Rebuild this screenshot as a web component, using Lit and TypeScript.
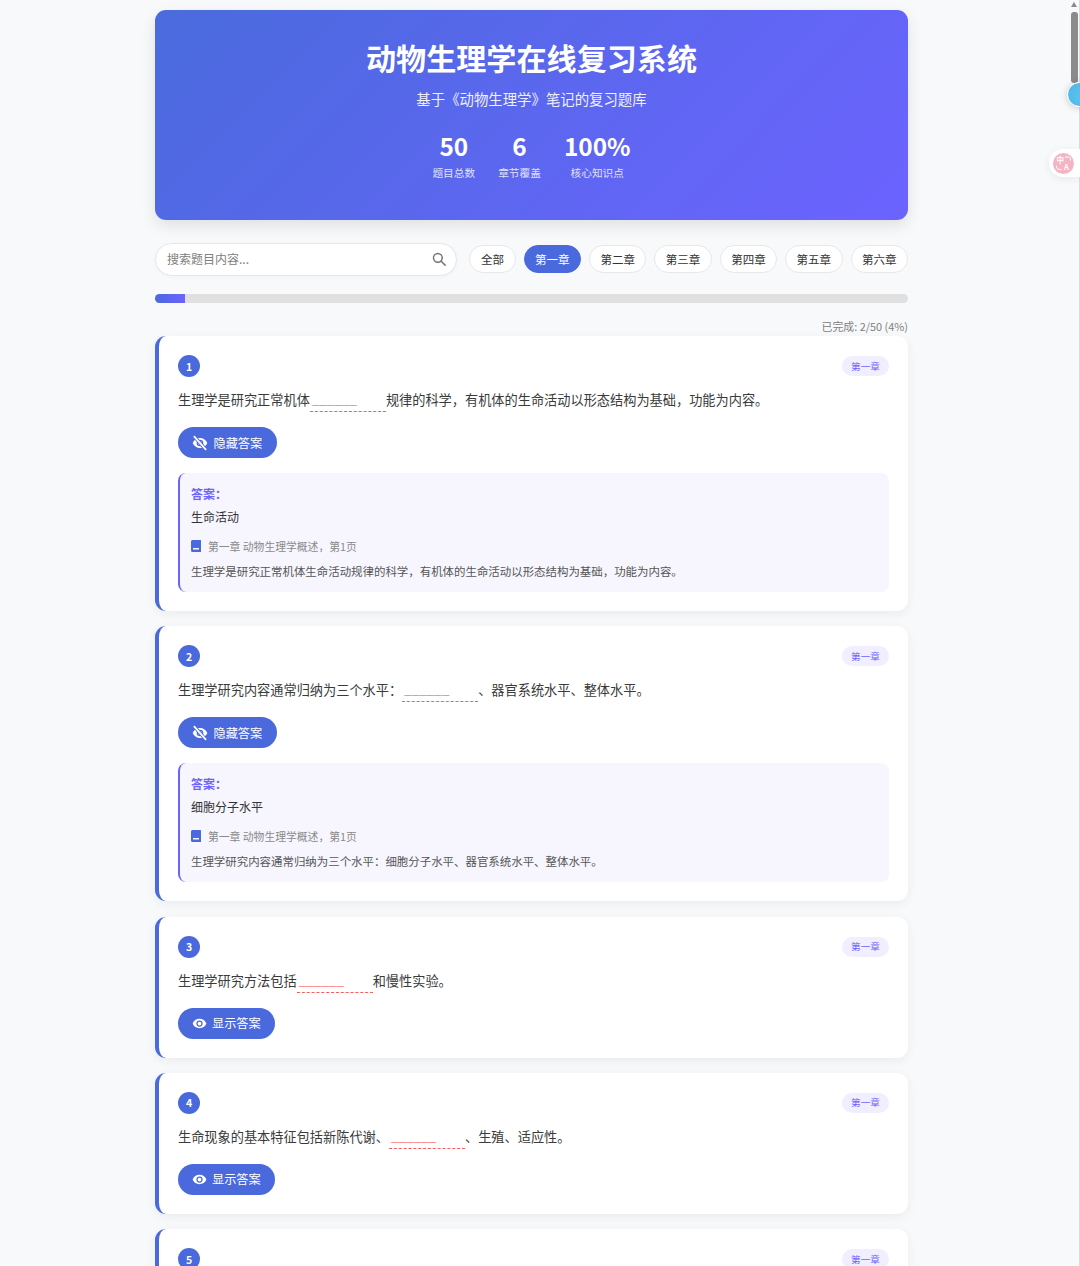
import { LitElement, html, css, nothing } from "lit";
import { customElement } from "lit/decorators.js";

interface Q { n: number; before?: string; after?: string; open?: boolean; answer?: string; note?: string; }

const C = "\uFF0C";
const K = "\uFF1A";
const QS: Q[] = [
  { n: 1, before: "生理学是研究正常机体", after: `规律的科学${C}有机体的生命活动以形态结构为基础${C}功能为内容。`, open: true, answer: "生命活动", note: `生理学是研究正常机体生命活动规律的科学${C}有机体的生命活动以形态结构为基础${C}功能为内容。` },
  { n: 2, before: `生理学研究内容通常归纳为三个水平${K}`, after: "、器官系统水平、整体水平。", open: true, answer: "细胞分子水平", note: `生理学研究内容通常归纳为三个水平${K}细胞分子水平、器官系统水平、整体水平。` },
  { n: 3, before: "生理学研究方法包括", after: "和慢性实验。" },
  { n: 4, before: "生命现象的基本特征包括新陈代谢、", after: "、生殖、适应性。" },
  { n: 5 },
];
const PILLS = ["全部", "第一章", "第二章", "第三章", "第四章", "第五章", "第六章"];

const eye = html`<svg class="bi" viewBox="0 0 24 24"><path fill="currentColor" d="M12 4.5C7 4.5 2.7 7.6 1 12c1.7 4.4 6 7.5 11 7.5s9.3-3.1 11-7.5c-1.7-4.4-6-7.5-11-7.5zm0 12.5a5 5 0 1 1 0-10 5 5 0 0 1 0 10zm0-8a3 3 0 1 0 0 6 3 3 0 0 0 0-6z"/></svg>`;
const eyeOff = html`<svg class="bi off" viewBox="0 0 24 24"><path fill="currentColor" d="M12 4.5C7 4.5 2.7 7.6 1 12c1.7 4.4 6 7.5 11 7.5s9.3-3.1 11-7.5c-1.7-4.4-6-7.5-11-7.5zm0 12.5a5 5 0 1 1 0-10 5 5 0 0 1 0 10zm0-8a3 3 0 1 0 0 6 3 3 0 0 0 0-6z"/><path d="M3.5 2.5l17 19" stroke="#4a69dd" stroke-width="5" fill="none"/><path d="M3.5 2.5l17 19" stroke="currentColor" stroke-width="2.6" stroke-linecap="round" fill="none"/></svg>`;

@customElement("app-root")
export class AppRoot extends LitElement {
  static styles = css`
    :host { display: block; position: relative; height: 1266px; overflow: hidden; background: #f8f9fb; color: #333;
      font-family: "Noto Sans CJK SC", "Noto Sans", sans-serif; }
    * { box-sizing: border-box; }
    .page { width: 1063px; padding: 10px 155px 0; }
    .hero { height: 210px; border-radius: 11px; background: linear-gradient(135deg, #4a6bdd, #6c63ff); color: #fff;
      box-shadow: 0 6px 15px rgba(0,0,0,.1); padding-top: 24.5px; text-align: center; display: flex; flex-direction: column; align-items: center; }
    h1 { margin: 0; font-size: 30.1px; line-height: 45px; font-weight: 700; }
    .sub { margin-top: 9.5px; font-size: 14.4px; line-height: 20px; opacity: .9; }
    .stats { display: flex; gap: 23px; margin-top: 19px; }
    .stat { display: flex; flex-direction: column; align-items: center; }
    .num { font-size: 24.4px; line-height: 36px; font-weight: 700; }
    .lab { font-size: 10.7px; line-height: 16px; opacity: .8; margin-top: 1px; }
    .tools { display: flex; align-items: center; justify-content: space-between; margin-top: 22.5px; }
    .search { flex: none; width: 302px; height: 33px; background: #fff; border: 1px solid #e6e6e8; border-radius: 17px; display: flex; align-items: center;
      justify-content: space-between; padding: 0 11px 1px; font-size: 12px; color: #808080; box-shadow: 0 1px 4px rgba(0,0,0,.03); }
    .search svg { width: 14px; height: 14px; color: #757575; margin-right: -1px; }
    .pills { display: flex; gap: 7.9px; flex: none; }
    .pill { height: 28px; padding: 0 10.5px 1px; min-width: 46.5px; justify-content: center; border-radius: 14px; background: #fff; border: 1px solid #e8e8ea; font-size: 11.5px; display: flex; align-items: center; color: #333; white-space: nowrap; }
    .pill.on { background: #4a69dd; border-color: #4a69dd; color: #fff; }
    .track { height: 9px; margin-top: 18.5px; border-radius: 5px; background: #e0e0e0; overflow: hidden; }
    .fill { height: 100%; width: 4%; background: linear-gradient(90deg, #4a69dd, #6c63ff); }
    .done { margin-top: 16px; text-align: right; font-size: 10.9px; line-height: 15px; color: #808080; height: 16px; }
    .card { margin-top: 15.3px; background: #fff; border-left: 4px solid #4a69dd; border-radius: 11px; padding: 19px;
      box-shadow: 0 3px 11px rgba(0,0,0,.06); }
    .done + .card { margin-top: 1px; }
    .head { display: flex; justify-content: space-between; align-items: center; height: 22px; }
    .badge { width: 22px; height: 22px; border-radius: 50%; background: #4a69dd; color: #fff; font-size: 10.5px; font-weight: 700; display: flex; align-items: center; justify-content: center; }
    .tag { height: 20px; width: 47px; border-radius: 10px; background: #f1eeff; color: #6c63ff; font-size: 9.6px; padding-bottom: 1px; display: flex; align-items: center; justify-content: center; }
    .q { margin-top: 13px; font-size: 13.2px; line-height: 20px; color: #3a3a3a; height: 21px; white-space: nowrap; }
    .blank { display: inline-block; width: 76px; height: 22px; border-bottom: 1px dashed #ff5a5f; color: #ff8080; vertical-align: top; padding-left: 2px; line-height: 17px; font-size: 13.5px; }
    .btn { height: 31px; display: inline-flex; align-items: center; gap: 5px; padding: 0 14.5px 0 14px; border-radius: 16px; background: #4a69dd; color: #fff; font-size: 12.2px; white-space: nowrap; }
    .bi { width: 15px; height: 15px; flex: none; }
    .bi.off { width: 16px; height: 16px; margin-right: .5px; }
    .btn-row { height: 31px; margin-top: 16px; }
    .ans { margin-top: 15px; height: 119px; background: #f7f6ff; border-left: 2px solid #6c63ff; border-radius: 8px; padding: 11px 11px 0 11px; }
    .al { font-size: 12px; line-height: 20px; font-weight: 700; color: #6c63ff; }
    .av { font-size: 12px; line-height: 18px; margin-top: 3.5px; color: #333; }
    .src { display: flex; align-items: center; gap: 7px; margin-top: 12.5px; font-size: 10.8px; line-height: 16px; color: #8a8a8a; height: 16px; white-space: nowrap; }
    .src svg { width: 10px; height: 12px; flex: none; color: #4a69dd; }
    .exp { margin-top: 9px; font-size: 11.45px; line-height: 16px; color: #555; white-space: nowrap; }
    .bar-arrow { position: absolute; left: 1071px; top: 2px; width: 0; height: 0; border-left: 3.5px solid transparent; border-right: 3.5px solid transparent; border-bottom: 5px solid #8a8a8a; }
    .thumb { position: absolute; left: 1071px; top: 12px; width: 7px; height: 71px; border-radius: 3px; background: #8b8b8b; }
    .edge { position: absolute; right: 0; top: 0; bottom: 0; width: 1px; background: #d5dde6; }
    .orb { position: absolute; left: 1067px; top: 82px; width: 25px; height: 25px; border-radius: 50%; background: radial-gradient(circle at 60% 55%, #5cc4ef, #4db5e8); border: 1.5px solid #fff; box-shadow: 0 1px 7px rgba(0,0,0,.2); }
    .tr { position: absolute; left: 1049px; top: 149px; width: 31px; height: 28px; background: #fff; border-radius: 14px 0 0 14px; box-shadow: 0 2px 8px rgba(0,0,0,.07); display: flex; align-items: center; padding-left: 4px; }
    .tr svg { width: 21px; height: 21px; flex: none; }
    .tr text { fill: #fff; font-size: 7.5px; font-weight: 700; font-family: "Noto Sans CJK SC", sans-serif; }
  `;

  private card(q: Q) {
    return html`<section class="card">
      <div class="head"><div class="badge">${q.n}</div><div class="tag">第一章</div></div>
      ${q.before ? html`
      <div class="q">${q.before}<span class="blank">______</span>${q.after}</div>
      <div class="btn-row"><span class="btn">${q.open ? eyeOff : eye}${q.open ? "隐藏答案" : "显示答案"}</span></div>` : nothing}
      ${q.open ? html`<div class="ans">
        <div class="al">答案${K}</div>
        <div class="av">${q.answer}</div>
        <div class="src"><svg viewBox="0 0 10 12"><path fill="currentColor" fill-rule="evenodd" d="M1.5 0h8a.5.5 0 0 1 .5.5v11a.5.5 0 0 1-.5.5h-8A1.5 1.5 0 0 1 0 10.5v-9A1.5 1.5 0 0 1 1.5 0zM2 8V9.500h6V8z"/></svg>第一章 动物生理学概述${C}第1页</div>
        <div class="exp">${q.note}</div>
      </div>` : nothing}
    </section>`;
  }

  render() {
    return html`<div class="page">
      <header class="hero">
        <h1>动物生理学在线复习系统</h1>
        <div class="sub">基于《动物生理学》笔记的复习题库</div>
        <div class="stats">
          <div class="stat"><div class="num">50</div><div class="lab">题目总数</div></div>
          <div class="stat"><div class="num">6</div><div class="lab">章节覆盖</div></div>
          <div class="stat"><div class="num">100%</div><div class="lab">核心知识点</div></div>
        </div>
      </header>
      <div class="tools">
        <div class="search"><span>搜索题目内容...</span>
          <svg viewBox="0 0 16 16" fill="none" stroke="currentColor" stroke-width="1.7"><circle cx="6.7" cy="6.7" r="5"/><path d="M10.5 10.5l4.5 4.5" stroke-linecap="round"/></svg>
        </div>
        <div class="pills">${PILLS.map((p, i) => html`<div class="pill ${i === 1 ? "on" : ""}">${p}</div>`)}</div>
      </div>
      <div class="track"><div class="fill"></div></div>
      <div class="done">已完成: 2/50 (4%)</div>
      ${QS.map((q) => this.card(q))}
    </div>
    <div class="edge"></div>
    <div class="bar-arrow"></div>
    <div class="thumb"></div>
    <div class="orb"></div>
    <div class="tr"><svg viewBox="0 0 21 21"><circle cx="10.5" cy="10.5" r="10.5" fill="#f4b4c4"/><text x="3.5" y="10">中</text><text x="11" y="17">A</text><path d="M12 4h3.5a2 2 0 0 1 2 2v1.5M3.5 12.5v1a3 3 0 0 0 3 3h2" fill="none" stroke="#fff" stroke-width="1"/></svg></div>`;
  }
}
